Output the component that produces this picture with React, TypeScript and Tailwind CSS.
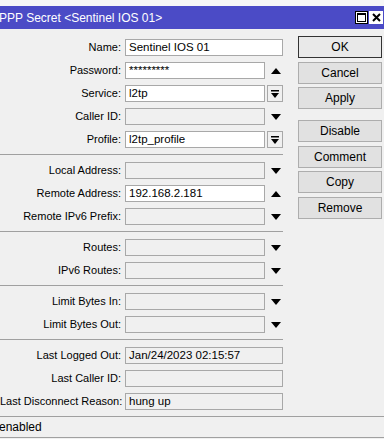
import React from "react";

type Arrow = "up" | "down" | "combo" | "none";

const rows: { label: string; value?: string; white?: boolean; arrow: Arrow }[][] = [
  [
    { label: "Name", value: "Sentinel IOS 01", white: true, arrow: "none" },
    { label: "Password", value: "*********", white: true, arrow: "up" },
    { label: "Service", value: "l2tp", white: true, arrow: "combo" },
    { label: "Caller ID", arrow: "down" },
    { label: "Profile", value: "l2tp_profile", white: true, arrow: "combo" },
  ],
  [
    { label: "Local Address", arrow: "down" },
    { label: "Remote Address", value: "192.168.2.181", white: true, arrow: "up" },
    { label: "Remote IPv6 Prefix", arrow: "down" },
  ],
  [
    { label: "Routes", arrow: "down" },
    { label: "IPv6 Routes", arrow: "down" },
  ],
  [
    { label: "Limit Bytes In", arrow: "down" },
    { label: "Limit Bytes Out", arrow: "down" },
  ],
  [
    { label: "Last Logged Out", value: "Jan/24/2023 02:15:57", arrow: "none" },
    { label: "Last Caller ID", arrow: "none" },
    { label: "Last Disconnect Reason", value: "hung up", arrow: "none" },
  ],
];

function Tri({ up }: { up?: boolean }) {
  return (
    <svg width="10" height="6" viewBox="0 0 10 6" className="block">
      <path d={up ? "M0 6 L5 0 L10 6 Z" : "M0 0 L10 0 L5 6 Z"} fill="#000" />
    </svg>
  );
}

function Field({ row }: { row: (typeof rows)[number][number] }) {
  const w = row.arrow === "none" ? "w-[158px]" : "w-[140px]";
  return (
    <div className="flex items-center h-[23px]">
      <div className="w-[121px] text-right whitespace-nowrap">{row.label}:</div>
      <div
        className={`ml-[4px] h-[17px] ${w} border border-[#a8a8a8] flex items-center pl-[3px] whitespace-nowrap text-[11.5px] ${
          row.white ? "bg-white" : "bg-[#f0f0f0]"
        }`}
      >
        {row.value}
      </div>
      {row.arrow === "up" && (
        <div className="w-[19px] flex justify-center pl-[3px]">
          <Tri up />
        </div>
      )}
      {row.arrow === "down" && (
        <div className="w-[19px] flex justify-center pl-[3px]">
          <Tri />
        </div>
      )}
      {row.arrow === "combo" && (
        <div className="ml-[2px] w-[16px] h-[17px] border border-[#a8a8a8] bg-[#f0f0f0] flex items-center justify-center">
          <svg width="8" height="8" viewBox="0 0 8 8" className="block">
            <rect x="0" y="0" width="8" height="1.5" fill="#000" />
            <path d="M0 3 L8 3 L4 8 Z" fill="#000" />
          </svg>
        </div>
      )}
    </div>
  );
}

const buttons = ["OK", "Cancel", "Apply", "Disable", "Comment", "Copy", "Remove"];

export default function App() {
  return (
    <div
      className="w-[384px] h-[439px] bg-[#f0f0f0] overflow-hidden text-[11px] text-black flex flex-col"
      style={{ fontFamily: '"Liberation Sans", Arial, sans-serif' }}
    >
      <div className="h-[6px] bg-[#f7f7f7] shrink-0" />
      {/* title bar */}
      <div className="h-[23px] bg-[#4b4bc6] text-white text-[12px] flex items-center justify-between shrink-0">
        <span className="-ml-[1px] whitespace-nowrap">PPP Secret &lt;Sentinel IOS 01&gt;</span>
        <div className="flex items-center gap-[1px] pr-[1px]">
          <div className="w-[13px] h-[13px] bg-white border border-black flex items-center justify-center">
            <div className="w-[9px] h-[9px] border border-black border-t-2" />
          </div>
          <div className="w-[14px] h-[13px] bg-white flex items-center justify-center">
            <svg width="9" height="9" viewBox="0 0 9 9">
              <path d="M1 1 L8 8 M8 1 L1 8" stroke="#000" strokeWidth="2" />
            </svg>
          </div>
        </div>
      </div>

      <div className="flex flex-1 pt-[7px]">
        {/* form */}
        <div className="w-[284px] flex flex-col">
          {rows.map((group, gi) => (
            <div key={gi}>
              {gi > 0 && <div className="mt-[3px] mb-[4px] h-px w-[283px] bg-[#a0a0a0]" />}
              {group.map((r) => (
                <Field key={r.label} row={r} />
              ))}
            </div>
          ))}
        </div>

        {/* buttons */}
        <div className="ml-[14px] w-[84px] flex flex-col">
          {buttons.map((b, i) => (
            <div
              key={b}
              className={`h-[22px] flex items-center justify-center text-[12px] border ${
                i === 0 ? "border-[#333333] bg-[#e9e9e9]" : "border-[#adadad] bg-[#e1e1e1]"
              } ${i === 0 ? "" : i === 3 ? "mt-[11px]" : "mt-[3.5px]"}`}
            >
              {b}
            </div>
          ))}
        </div>
      </div>

      {/* status bar */}
      <div className="h-[22px] border-t border-b border-[#a0a0a0] flex items-center shrink-0 mb-[1px] text-[12px]">
        <span className="-ml-[1px]">enabled</span>
      </div>
    </div>
  );
}
